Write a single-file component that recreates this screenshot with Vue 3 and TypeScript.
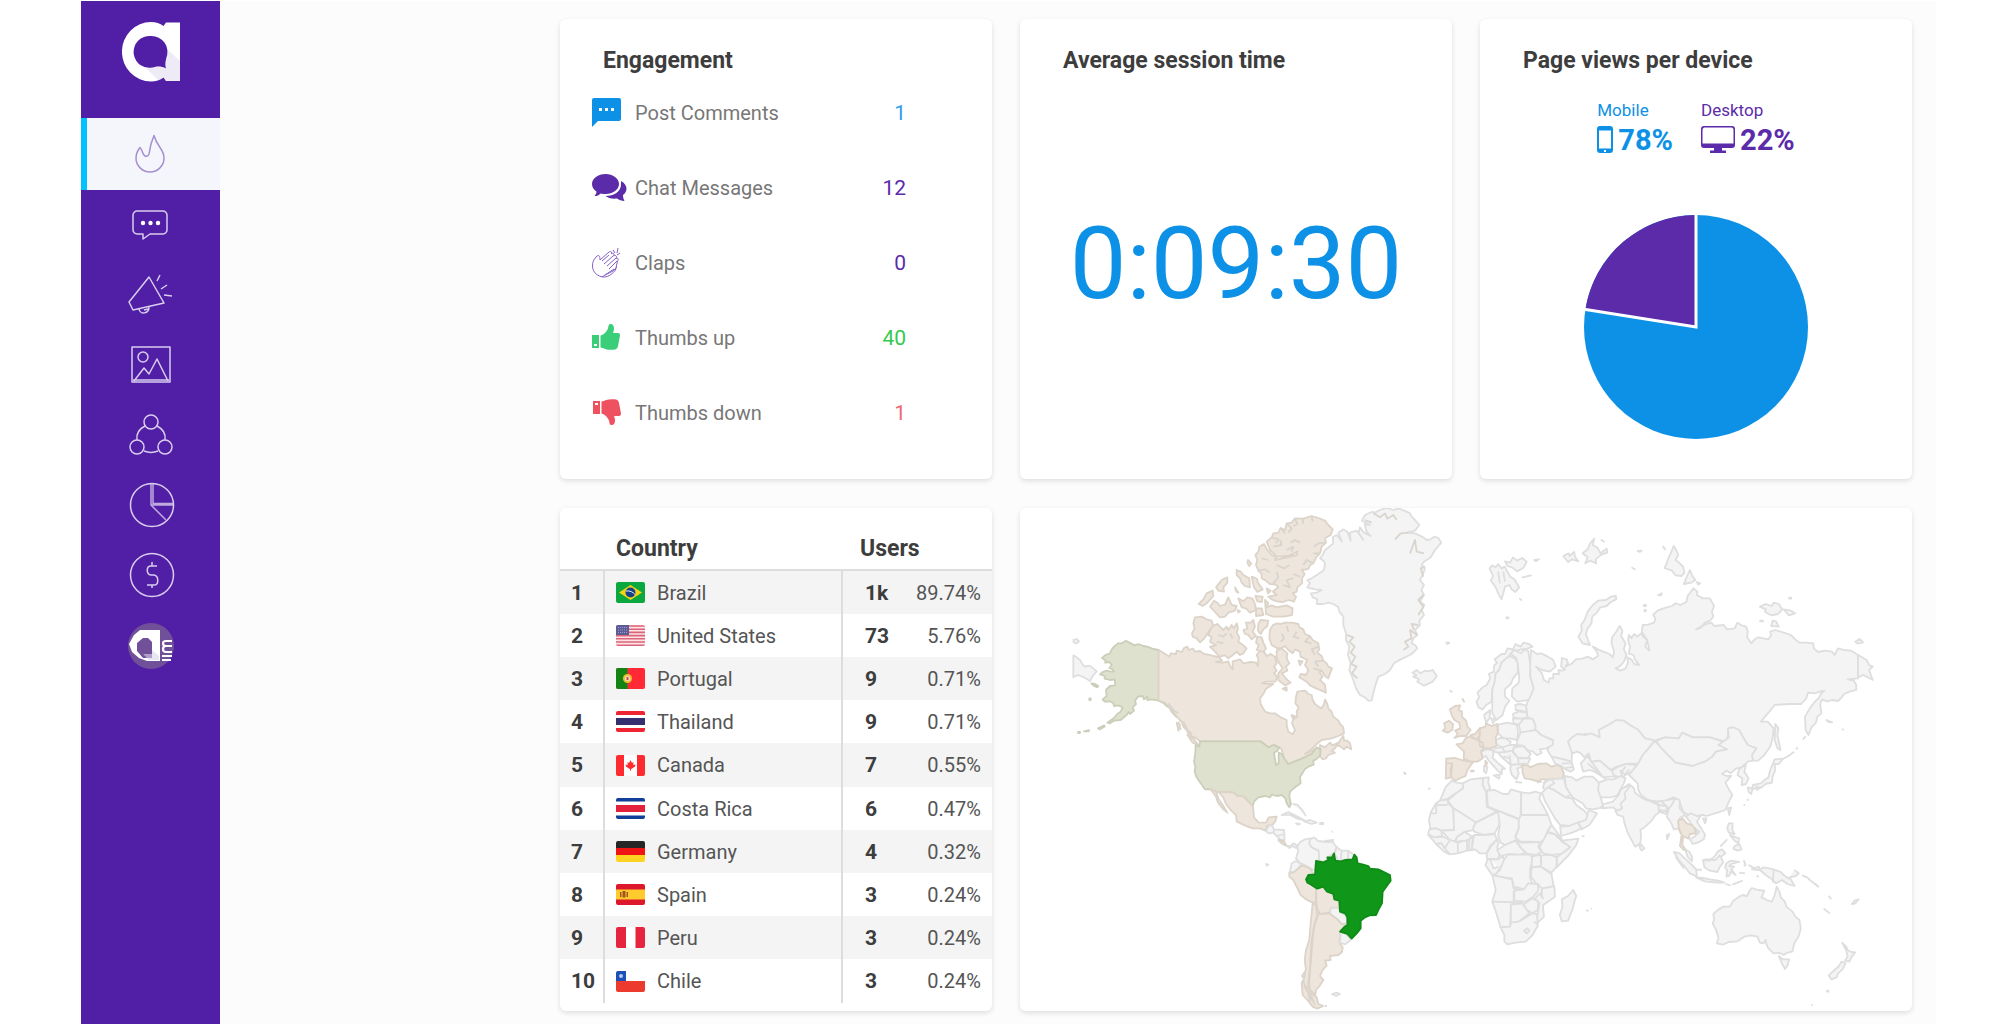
<script setup lang="ts">
interface Metric {
  key: string
  label: string
  value: string
  color: string
}

interface CountryRow {
  code: string
  name: string
  users: string
  share: string
}

interface Shape {
  d: string
  tone?: 'visited' | 'active' | 'top' | 'line'
}

interface Region {
  transform: string
  shapes: Shape[]
}

const navItems = ['Trending', 'Comments', 'Campaigns', 'Media', 'Network', 'Reports', 'Billing', 'Account']

const metrics: Metric[] = [
  { key: 'comments', label: 'Post Comments', value: '1', color: '#2f9fee' },
  { key: 'chat', label: 'Chat Messages', value: '12', color: '#5b2baa' },
  { key: 'claps', label: 'Claps', value: '0', color: '#5b2baa' },
  { key: 'up', label: 'Thumbs up', value: '40', color: '#33c94f' },
  { key: 'down', label: 'Thumbs down', value: '1', color: '#ef6b74' },
]

const countries: CountryRow[] = [
  { code: 'br', name: 'Brazil', users: '1k', share: '89.74%' },
  { code: 'us', name: 'United States', users: '73', share: '5.76%' },
  { code: 'pt', name: 'Portugal', users: '9', share: '0.71%' },
  { code: 'th', name: 'Thailand', users: '9', share: '0.71%' },
  { code: 'ca', name: 'Canada', users: '7', share: '0.55%' },
  { code: 'cr', name: 'Costa Rica', users: '6', share: '0.47%' },
  { code: 'de', name: 'Germany', users: '4', share: '0.32%' },
  { code: 'es', name: 'Spain', users: '3', share: '0.24%' },
  { code: 'pe', name: 'Peru', users: '3', share: '0.24%' },
  { code: 'cl', name: 'Chile', users: '3', share: '0.24%' },
]

const regions: Region[] = [
  {
    // North America and Greenland
    transform: 'translate(-10 -8) scale(.33333)',
    shapes: [
      { d: 'M190 466L200 472 210 480 218 494 225 500 238 497 246 502 260 514 248 528 240 543 222 532 212 528 203 525 190 532Z' },
      { d: 'M190 420L200 417 207 424 200 430 192 428Z' },
      { d: 'M970 130L958 140 945 150 938 165 930 175 940 182 945 190 942 210 925 222 905 235 892 240 900 250 892 262 915 268 935 270 920 278 903 280 908 292 922 298 920 312 940 312 955 308 970 312 985 322 988 335 1000 350 1000 375 1008 400 1008 420 1018 440 1014 465 1022 490 1018 510 1030 540 1038 565 1050 585 1065 592 1075 602 1085 602 1090 580 1098 550 1105 530 1125 522 1140 510 1152 490 1165 482 1185 472 1205 462 1222 445 1215 435 1205 430 1210 415 1222 405 1215 390 1230 375 1228 362 1242 345 1235 330 1243 315 1230 305 1242 285 1234 270 1242 255 1230 240 1240 220 1245 205 1235 195 1242 185 1262 172 1275 150 1294 128 1285 114 1273 110 1262 118 1250 120 1240 112 1215 100 1190 98 1215 92 1228 75 1215 60 1205 50 1200 40 1190 35 1165 25 1150 30 1130 24 1110 30 1095 38 1085 36 1065 45 1056 62 1080 75 1064 72 1070 95 1082 108 1062 98 1050 82 1046 98 1060 120 1040 92 1020 98 1022 122 1012 95 1000 88 985 98 996 125 980 105 968 112Z' },
      { d: 'M1090 40L1110 52 1125 40 1132 56 1150 45 1160 60M1065 60L1085 68M1155 118L1172 100 1195 98M1010 405L1030 412 1018 425 1034 440 1022 458 1036 470 1024 492 1040 500 1026 520 1042 535M1222 405L1200 390 1205 415 1185 425 1195 440 1180 450M1225 375L1205 372 1212 390M1242 160L1220 155 1215 120 1200 160M1245 200L1232 205 1240 230M1240 285L1225 300 1240 320 1225 345', tone: 'line' },
      { d: 'M446 450L430 447 412 440 400 438 385 432 375 436 362 430 348 422 335 430 325 430 312 440 304 450 300 460 285 466 276 474 288 482 285 488 298 486 305 495 298 504 308 508 312 515 300 514 290 512 278 516 270 523 284 528 284 536 300 540 314 538 316 556 300 558 288 570 290 588 278 598 284 605 300 604 310 610 312 618 326 616 338 622 332 635 322 642 312 654 292 668 300 670 312 662 332 660 350 645 356 636 360 642 372 632 368 622 378 612 375 602 384 590 398 588 402 598 412 590 412 600 425 598 446 602Z', tone: 'active' },
      { d: 'M446 602L462 600 472 608 485 608 490 616 500 626 505 638 515 645 522 660 512 664 508 652 498 650 485 635 480 625 470 618 462 610Z', tone: 'active' },
      { d: 'M244 550L255 552 265 558 262 562 250 556ZM238 595H242V600H238ZM264 685L283 676 284 680 268 688ZM222 694L237 690 236 694ZM204 696H210V699H204Z', tone: 'active' },
      { d: 'M446 450L462 460 478 470 482 460 498 462 500 452 516 456 522 444 532 440 536 450 548 446 556 455 570 453 582 462 596 464 610 468 628 472 636 482 618 486 640 488 655 484 660 498 668 508 668 484 690 478 700 490 722 486 738 488 744 498 745 475 740 465 752 450 762 455 770 468 782 462 795 470 800 490 792 500 800 512 792 520 802 530 796 545 770 545 755 550 775 552 790 552 768 566 760 582 750 595 752 612 765 635 780 640 795 640 812 652 830 660 830 675 835 695 848 703 855 690 846 670 850 658 862 650 860 635 866 622 856 610 858 590 862 575 885 572 895 582 905 585 908 600 915 612 925 620 935 625 942 612 945 598 952 612 955 625 965 635 970 650 985 662 990 672 1000 682 1002 700 985 708 962 716 935 720 920 732 908 745 885 762 900 756 915 748 905 762 870 778 835 792 822 775 815 748 795 735 775 742 752 724 570 724 560 715 545 708 535 700 530 690 520 680 515 665 500 650 485 630 465 608 446 602Z', tone: 'visited' },
      { d: 'M930 735L945 742 960 728 968 736 985 728 975 745 965 752 975 758 955 765 948 775 938 778 930 768Z', tone: 'visited' },
      { d: 'M982 736L992 718 1000 708 1002 722 1012 722 1020 730 1024 748 1010 740 1002 748 992 740Z', tone: 'visited' },
      { d: 'M555 352L575 350 590 358 605 362 610 378 598 392 590 405 580 418 570 427 560 415 548 410 546 400 554 385 550 370Z', tone: 'visited' },
      { d: 'M608 378L622 372 632 382 640 390 650 380 656 390 665 375 672 385 680 370 684 385 680 398 688 412 685 425 700 436 710 445 700 460 690 465 680 455 672 462 655 475 645 466 628 470 615 455 600 440 618 436 600 425 605 412 595 405 600 390Z', tone: 'visited' },
      { d: 'M700 390L712 386 708 368 722 368 730 360 735 380 728 395 738 408 725 418 715 405 705 402Z', tone: 'visited' },
      { d: 'M745 372L752 360 775 362 772 378 760 388 752 402 744 392ZM742 410L755 412 760 428 768 445 760 456 740 450 746 435 738 428Z', tone: 'visited' },
      { d: 'M780 390L788 376 800 370 812 372 825 368 845 368 865 372 868 382 880 388 885 402 900 408 908 420 925 430 928 448 922 458 935 468 940 482 950 490 955 500 966 505 960 520 955 535 945 528 935 512 928 516 938 530 930 540 945 555 948 578 935 572 920 566 900 556 890 545 868 532 872 522 888 525 895 510 885 495 892 480 872 470 870 455 855 448 848 460 835 450 825 438 815 445 800 444 785 435 778 415Z', tone: 'visited' },
      { d: 'M800 452L815 445 832 460 830 475 838 490 828 500 832 512 815 520 832 540 842 548 825 556 805 540 805 520 818 505 808 490 800 475Z', tone: 'visited' },
      { d: 'M765 300L775 310 768 322 785 316 800 322 830 316 848 325 846 345 820 350 790 350 768 342Z', tone: 'visited' },
      { d: 'M770 125L785 112 790 100 805 98 812 84 825 90 830 70 845 68 855 55 880 56 905 48 925 54 945 62 955 75 968 88 962 105 945 115 948 128 935 140 930 160 920 170 910 190 900 196 895 207 875 210 884 222 876 235 876 250 862 262 860 275 848 280 858 290 852 305 835 300 820 306 800 304 785 298 775 290 800 285 788 275 805 262 798 254 780 252 770 244 755 235 755 222 745 212 738 195 742 180 736 165 745 155 748 140 762 132 772 150 785 165 800 172 795 180 830 172 860 165 862 155 835 168 800 170 780 150Z', tone: 'visited' },
      { d: 'M855 55L862 72 850 78M880 56L878 72M905 48L908 65M830 70L845 85 835 98M812 84L825 100M785 112L805 118 798 130M790 140L815 135 810 120M830 150L850 140 845 155M870 128L855 120 842 128M945 128L925 130 912 140M930 160L910 160M910 190L890 180 880 195M755 175L775 180M745 212L765 208 780 218M790 250L805 232 800 215M820 255L840 262 830 240 850 235M800 195L822 205 838 195M870 230L850 222M835 395L830 378M860 395L850 410 868 415M900 408L885 425 905 430M925 440L905 448 915 465M940 482L915 485 925 500M935 512L910 505M815 400L822 415 812 425M625 405L640 410 650 400M660 400L668 415M620 425L640 430M655 300L660 320M632 335L645 328M520 665L532 690 545 702M505 665L512 690M475 610L492 632 505 640', tone: 'line' },
      { d: 'M680 210L692 215 700 225 718 235 720 262 705 258 695 248 690 235 680 225ZM725 230L740 236 745 250 758 268 742 276 732 262ZM600 320L612 302 622 308 630 318 645 314 655 292 665 315 680 318 675 332 655 338 645 350 630 352 615 336ZM566 312L580 298 590 280 608 272 610 288 592 308 578 318ZM618 262L635 240 652 232 652 248 640 262 642 275 625 272ZM685 295L700 304 712 292 728 296 735 312 738 330 720 338 708 325 695 322ZM738 325L755 325 760 345 738 348ZM736 288L758 290 756 306 742 304ZM714 180L724 190 718 198 712 188ZM675 262L685 278 679 275ZM770 265L782 272 774 280ZM683 330L690 334 685 338ZM818 566L830 562 830 572ZM866 482L878 484 870 496ZM500 668L510 675 505 692ZM532 704L552 718 565 735 548 728ZM845 645L855 648 848 655Z', tone: 'visited' },
      { d: 'M570 724L752 724 775 742 790 735 808 742 802 752 792 758 798 795 806 790 806 758 816 762 822 775 835 792 870 778 905 762 920 742 932 748 930 768 918 778 910 782 911 794 895 800 884 808 876 822 870 830 872 850 855 862 840 875 838 890 843 912 838 922 830 910 826 895 815 885 800 888 785 884 780 892 765 888 745 892 732 905 728 918 716 908 710 898 698 888 688 892 670 878 620 876 602 868 585 868 572 850 560 832 554 815 556 800 552 785 556 760 557 735 568 740Z', tone: 'active' },
    ],
  },
  {
    // Central and South America
    transform: 'translate(190 252) scale(.33333)',
    shapes: [
      { d: 'M2 88L20 95 70 98 82 108 98 108 112 122 128 138 130 150 132 172 145 187 168 188 176 172 200 170 196 184 186 196 172 196 166 212 150 205 128 205 104 196 80 184 78 165 60 148 48 132 40 112 28 98 18 96 26 118 40 138 52 158 40 148 24 128 18 110Z', tone: 'visited' },
      { d: 'M168 214L176 197 186 197 192 208 222 210 224 240 212 240 200 228 190 218 176 220ZM192 208L190 218M200 228L224 222' },
      { d: 'M205 240L222 244 230 258 215 250Z', tone: 'visited' },
      { d: 'M230 256L240 260 250 250 262 256 258 264 248 258 238 264Z' },
      { d: 'M215 165L235 156 255 166 282 180 262 176 240 164ZM282 184L300 180 320 188 305 192ZM258 190L270 192 262 194ZM330 189H340V192H330ZM248 132L262 134 275 148 288 168M365 215H369M345 243L370 240 368 246 352 246ZM168 312L175 314 170 317Z' },
      { d: 'M300 235L285 238 270 247 262 258 264 275 258 295 268 308 285 316 300 325 316 332 318 302 328 302 326 272 306 262 298 252 304 240Z' },
      { d: 'M300 238L312 232 325 243 350 246 368 246 380 262 372 280 355 290 345 305 328 303 326 272 306 262 298 252Z' },
      { d: 'M380 262L395 272 415 272 432 285 427 298 405 300 385 303 374 282ZM395 272L392 300M415 272L414 300' },
      { d: 'M245 310L258 303 274 312 262 328 250 338 240 335Z' },
      { d: 'M238 337L250 338 262 328 276 316 300 325 312 345 290 355 300 372 318 384 318 430 300 424 285 416 272 405 262 384 250 360 238 350Z', tone: 'visited' },
      { d: 'M318 385L340 380 350 394 370 402 375 420 388 425 388 445 365 443 358 458 345 460 330 464 320 440Z', tone: 'visited' },
      { d: 'M362 446L378 442 388 448 390 457 408 465 412 490 395 492 385 480 360 462Z' },
      { d: 'M325 462L358 460 382 478 395 492 410 495 392 515 388 548 398 562 396 576 385 585 360 588 362 600 345 602 350 616 338 630 330 648 340 660 330 676 318 690 316 705 300 690 297 670 302 610 307 550 312 500Z', tone: 'visited' },
      { d: 'M308 430L318 436 322 465 312 498 304 550 300 620 294 678 302 700 320 712 325 732 340 738 322 746 308 740 292 720 278 705 275 670 282 655 276 648 288 630 284 600 288 570 298 540 302 490Z', tone: 'visited' },
      { d: 'M290 690L305 712 315 735M282 675L295 700 300 725M286 640L280 665 292 690M296 705L310 725M345 738H350', tone: 'line' },
      { d: 'M392 516L404 520 416 530 422 540 405 553 390 548Z' },
      { d: 'M366 702L380 698 390 702 378 708Z' },
      { d: 'M318 303L340 307 355 300 352 292 366 292 372 280 376 302 392 304 405 300 428 298 433 284 440 292 443 310 460 314 475 318 480 326 505 328 525 338 540 345 542 362 532 376 518 395 516 430 506 448 498 465 478 466 465 472 452 482 452 505 440 520 425 536 412 522 390 515 402 502 412 495 412 472 405 460 390 455 388 422 373 418 370 402 350 394 340 380 322 386 300 372 292 368 288 358 295 345 315 343Z', tone: 'top' },
    ],
  },
  {
    // Europe and Northern Asia
    transform: 'translate(380 -8) scale(.34435 .33333)',
    shapes: [
      { d: 'M36 518L48 510 60 520 72 512 82 514 95 510 107 528 95 545 70 557 50 545 56 538 38 530 48 526Z' },
      { d: 'M260 205L268 196 278 202 285 192 295 205 304 200 312 215 320 230 332 238 346 262 335 276 324 268 318 255 305 260 300 280 295 298 286 282 278 262 264 242 270 228ZM305 184L320 188 328 172 340 182 355 174 368 185 358 204 340 214 325 202 312 198ZM390 180L404 178 395 184ZM356 232L380 226 366 230ZM348 296L352 300ZM309 352H315V355H309ZM134 428L143 428 138 432ZM146 572L150 576ZM285 215L290 250M300 215L305 245' },
      { d: 'M474 168L490 160 492 168 506 156 508 170 518 184 500 178 488 186ZM530 160L545 148 552 130 564 116 560 135 575 145 582 160 600 146 602 158 585 164 568 178 570 190 552 182 538 190 545 172ZM585 120L593 125ZM690 153L702 152 696 156ZM674 203L682 208ZM750 285L760 280 758 286ZM708 315H714V318H708ZM710 330H714V334H710ZM764 140L770 148Z' },
      { d: 'M627 288L628 298 612 306 600 318 582 322 570 340 558 350 556 370 545 385 540 402 546 420 552 435 530 430 518 410 528 392 526 375 536 360 545 335 560 315 575 302 598 300 612 290Z' },
      { d: 'M795 138L802 150 808 165 800 180 808 186 822 200 826 218 818 228 800 226 790 212 768 204 774 192 778 178 786 160ZM824 252L832 232 842 210 850 230 858 240 845 248ZM862 246L872 250 866 254Z' },
      { d: 'M1045 320L1062 312 1080 318 1085 308 1100 312 1110 328 1098 342 1078 346 1060 336 1062 328ZM1114 328L1135 332 1147 340 1130 346ZM1078 378L1082 362 1092 364 1100 380ZM1130 293H1136V296H1130ZM1046 362H1054V364H1046ZM1322 425L1335 417 1345 427 1330 431Z' },
      { d: 'M380 450L398 462 410 460 430 470 445 480 452 500 435 515 412 510 395 500 412 520 418 540 432 548 434 535 445 535 445 522 462 522 460 510 470 512 480 508 468 500 470 474 484 478 488 488 480 500 500 490 510 478 530 476 545 470 560 478 575 468 572 455 560 440 575 448 590 455 608 462 618 472 622 455 614 430 616 412 628 395 638 378 646 392 642 408 655 430 650 448 658 465 650 485 640 498 626 505 640 512 655 505 662 488 660 472 672 478 680 492 695 495 682 478 678 465 664 460 668 440 662 420 665 405 672 415 680 402 690 410 700 400 706 410 718 420 712 440 724 452 718 420 702 395 705 375 720 374 738 368 742 356 735 345 748 332 765 325 790 318 800 310 815 315 832 305 835 288 852 265 864 275 862 285 880 295 900 295 912 318 906 335 910 350 900 362 885 368 875 382 860 388 885 374 905 368 912 378 940 375 950 388 972 385 980 368 992 376 1005 380 1010 395 1008 412 1020 430 1030 418 1040 412 1070 418 1078 405 1075 395 1090 390 1115 398 1135 405 1148 418 1160 428 1180 428 1200 430 1202 445 1214 456 1235 452 1255 455 1262 465 1272 445 1290 450 1310 452 1330 465 1330 535 1300 538 1318 542 1325 555 1325 570 1305 575 1290 582 1280 595 1272 603 1255 600 1240 604 1226 598 1220 612 1224 640 1212 650 1208 668 1195 682 1186 705 1178 690 1176 650 1190 625 1205 605 1218 592 1222 582 1232 572 1215 576 1205 580 1185 578 1180 595 1165 612 1130 612 1088 615 1075 632 1048 665 1068 665 1085 685 1082 715 1075 740 1058 765 1040 782 1025 782 1022 765 1035 745 1010 735 998 715 985 690 965 682 955 685 952 710 945 725 900 712 850 712 820 698 810 715 770 712 740 722 712 715 690 690 650 662 610 672 578 690 580 712 540 702 500 712 488 725 500 752 498 785 475 778 440 770 428 750 445 720 410 705 390 690 390 665 370 650 366 620 372 600 388 565 378 530 378 490Z' },
      { d: 'M1330 465L1342 472 1355 480 1362 495 1373 500 1362 510 1373 540 1345 525 1330 532Z' },
      { d: 'M1090 672L1099 685 1096 705 1105 750 1096 745 1088 720ZM1110 778L1128 768 1145 755M1150 748L1155 742M1170 718L1178 708M1238 660L1255 667 1245 666ZM1283 687L1289 690' },
      { d: 'M225 578L240 562 252 555 262 535 258 522 272 515 274 495 282 490 275 478 295 462 305 462 312 445 328 448 335 432 350 440 358 428 375 432 385 440 370 446 352 448 340 452 330 450 320 462 312 475 295 488 288 510 278 520 275 545 268 570 266 605 250 615 240 628 228 622 222 605 230 592Z' },
      { d: 'M320 468L336 478 342 490 342 518 328 535 322 552 304 568 305 590 318 602 305 620 298 645 280 660 268 640 268 605 268 570 275 545 278 520 288 510 295 488 308 475Z' },
      { d: 'M330 450L352 460 358 450 372 452 378 490 378 530 388 565 374 600 340 605 325 590 326 565 345 548 346 530 342 490 338 475 322 462Z' },
      { d: 'M244 645L262 630 260 655 250 668ZM265 655L278 658 270 670Z' },
      { d: 'M335 615L348 612 366 616 368 636 350 632 336 630ZM328 642L345 634 368 638 370 652 352 656 330 652ZM328 655L352 656 360 665 345 674 330 670Z' },
      { d: 'M345 674L360 656 385 656 394 680 390 695 350 697Z' },
      { d: 'M285 674L312 668 340 675 343 700 340 720 318 715 300 715 285 700Z' },
      { d: 'M343 715L350 697 395 690 410 705 445 722 443 735 425 745 405 748 412 758 398 766 386 755 370 750 360 738 338 735Z' },
      { d: 'M276 722L290 714 305 715 322 725 318 735 298 742 282 735ZM298 742L318 735 338 735 326 752 304 756ZM274 745L298 742 304 756 285 758 272 755ZM330 742L358 738 370 752 380 762 370 775 342 772 328 758ZM285 758L304 756 326 752 342 772 345 792 322 795 305 780 292 768ZM300 770L320 775M318 765L322 795M345 775L378 775 372 790 348 792M322 795L345 792 358 800 340 805 345 820 338 838 325 825 320 808ZM335 846L355 848M398 848L412 845' },
      { d: 'M236 756L250 748 268 750 272 762 268 772 285 790 305 806 295 808 296 822 284 812 270 796 256 780 250 768 240 772ZM272 826L290 824 288 836ZM244 798L254 800 250 820 244 815Z' },
      { d: 'M232 685L248 680 250 670 265 678 282 672 284 700 278 712 280 738 262 745 245 745 232 738 230 710ZM205 705L218 702 232 684 232 708 222 718 208 714ZM164 733L182 730 190 715 205 708 220 718 240 728 244 745 235 755 240 775 225 785 205 785 185 776 186 755ZM145 628L160 618 175 616 170 630 180 635 180 650 192 662 196 680 205 690 192 708 175 708 158 714 168 702 160 692 175 685 172 668 158 660 150 645ZM124 692L132 685 128 670 142 662 154 672 152 690 138 698ZM134 776L160 774 185 782 213 786 202 800 195 812 190 828 172 836 160 842 148 832 152 790 134 790ZM134 790L152 790 146 810 148 832 133 836ZM248 782L253 790 248 798ZM206 812H214V814H206ZM182 597L186 605ZM12 818L16 822ZM82 866H88', tone: 'visited' },
      { d: 'M355 795L372 796 378 802 400 792 425 790 440 800 455 795 468 800 476 820 472 835 430 838 410 838 402 845 380 838 362 835 356 818Z', tone: 'visited' },
      { d: 'M440 770L475 778 498 785 505 808 495 815 480 808 470 798 450 790ZM470 790L500 790M478 805L505 800' },
      { d: 'M488 725L500 712 515 702 540 705 555 700 580 712 578 690 610 672 628 660 650 662 672 678 690 688 712 715 740 722 722 745 705 765 692 790 655 792 630 800 610 810 595 795 580 782 555 785 548 760 535 772 525 760 515 755 500 760Z' },
      { d: 'M525 790L545 768 556 786 580 782 600 800 615 812 635 800 655 792 690 795 678 812 655 825 640 812 650 838 628 828 612 830 590 832 570 818 552 810 532 815ZM545 790L600 840M556 786L590 832M615 812L625 835M655 800L640 820M665 808L650 830' },
      { d: 'M745 722L770 712 810 715 820 698 850 712 900 712 930 722 950 735 945 748 918 755 905 772 885 785 850 798 800 788 778 765 755 745Z' },
      { d: 'M740 722L760 745 778 765 800 788 850 798 885 785 905 772 918 755 950 748 925 735 945 720 955 712 952 685 968 682 985 690 998 715 1010 735 1035 745 1022 765 1025 782 1010 785 992 802 975 806 960 820 948 812 935 822 948 828 962 828 945 848 955 868 965 885 955 905 945 930 915 940 890 948 878 945 862 948 838 945 822 935 810 900 795 892 770 902 745 905 720 900 700 885 692 870 690 850 665 825 692 790 705 765 722 745Z' },
      { d: 'M985 808L1005 792 1000 815 1012 835 1005 852 992 855 994 835 980 825Z' },
      { d: 'M1088 778L1112 776 1100 792 1088 792 1090 810 1082 830 1080 848 1062 852 1050 862 1035 862 1022 870 1025 855 1048 850 1056 842 1070 832 1075 810ZM1010 862L1024 866 1020 882 1012 875ZM1035 860L1046 864 1036 870ZM952 925L962 922 956 945ZM880 955L890 955 886 970ZM998 914L1002 916M1010 896V902' },
      { d: 'M642 870L665 852 680 865 682 878 700 892 720 902 745 905 770 902 800 895 792 915 780 930 770 925 755 935 742 945 728 965 712 980 698 990 700 1005 698 1030 683 1040 675 1025 662 1000 652 970 648 950 632 945 625 932 645 925 640 912 655 895 650 882ZM697 1030L710 1045 702 1052 697 1045ZM720 900L750 915 748 905' },
      { d: 'M750 915L775 918 772 942 752 935ZM760 905L780 925M750 930L778 935' },
      { d: 'M583 922L592 912 618 905 635 885 642 868 655 860 668 858 652 880 655 895 640 912 645 925 632 932 618 922 590 925ZM578 848L600 838 620 838 640 828 655 835 650 850 640 868 632 885 615 892 583 892 575 870ZM478 828L500 832 512 842 535 830 560 830 578 848 575 870 583 892 590 922 560 928 540 925 530 910 505 895 495 885 482 862Z' },
      { d: 'M422 842L440 838 476 835 482 862 496 885 480 892 450 872 430 862 422 872 415 862ZM440 838L448 850 425 865M415 850L430 842' },
      { d: 'M412 878L430 862 450 872 480 892 500 895 512 915 535 932 545 945 540 960 515 968 490 978 465 975 450 955 435 928 422 905ZM465 980L490 978 515 968 528 985 500 998 468 1008ZM548 930L572 940 560 960 550 975 528 988 518 968 540 960ZM528 1008L536 1010' },
      { d: 'M780 928L792 910 798 895 812 900 812 925 828 945 812 955 808 970 815 1000 808 985 795 988 788 970 775 950ZM830 950L845 940 862 948 872 950 862 965 875 985 886 1005 882 1018 865 1028 850 1032 842 1018 858 1008 862 995 850 980 842 965ZM850 980L870 995 862 1005M775 1005L782 1002 776 1018Z' },
      { d: 'M808 962L822 956 832 970 848 975 858 988 858 1000 842 1002 838 1016 822 1008 820 1035 832 1052 824 1050 813 1038 818 1005 810 985Z', tone: 'visited' },
    ],
  },
  {
    // Africa, South-East Asia and Oceania
    transform: 'translate(380 252) scale(.34435 .33333)',
    shapes: [
      { d: 'M150 62L165 68 182 70 184 85 165 98 140 115 115 125 125 100 132 82Z' },
      { d: 'M105 130L115 122 138 118 140 130 155 145 157 210 120 212 104 205 88 206 84 180 90 155ZM90 160H105V135H138' },
      { d: 'M182 70L205 58 242 54 240 72 250 95 252 140 282 155 220 188 155 145 138 122 165 98 184 85Z' },
      { d: 'M242 54L258 52 256 68 262 85 250 95 240 75Z' },
      { d: 'M252 92L275 90 300 102 315 102 322 88 352 97 350 178 284 152 255 140Z' },
      { d: 'M352 97L375 100 392 95 410 100 404 115 416 138 430 165 352 165Z' },
      { d: 'M155 145L218 185 215 210 188 215 165 232 160 245 145 240 120 212 157 210Z' },
      { d: 'M220 188L284 155 292 165 288 195 275 220 245 225 215 215 212 205Z' },
      { d: 'M284 152L345 178 345 205 335 228 338 240 305 255 292 248 285 225 290 195Z' },
      { d: 'M352 165L430 165 440 195 428 215 418 240 405 248 380 245 350 245 335 232 345 205 345 178Z' },
      { d: 'M428 218L448 222 462 235 470 245 495 260 470 282 440 285 415 280 405 262Z' },
      { d: 'M440 195L462 225 470 238 450 222 428 215ZM470 242L518 236 512 255 490 285 455 322 455 292 495 262Z' },
      { d: 'M85 208L104 205 120 212 122 228 98 232 82 222ZM82 225L98 232 125 230 145 240 140 262 130 265 120 250 105 252 95 240Z' },
      { d: 'M105 252L120 250 130 265 145 283 128 275ZM130 265L145 240 168 248 168 280 145 283ZM168 248L195 240 194 272 168 280ZM160 245L165 232 188 215 210 230 195 242ZM195 242L212 228 208 270 194 272ZM202 238L200 272' },
      { d: 'M215 225L245 225 275 222 282 238 262 258 252 280 232 280 218 268 208 270Z' },
      { d: 'M252 280L265 258 282 238 286 250 282 262 290 275 285 298 252 296Z' },
      { d: 'M282 270L305 255 335 242 350 262 365 278 345 285 315 282 292 288Z' },
      { d: 'M338 240L352 248 405 246 402 262 412 275 395 285 370 282 350 262Z' },
      { d: 'M248 316L255 297 285 298 300 288 302 305 290 325 280 342 268 345ZM262 300L272 325 285 320' },
      { d: 'M302 300L312 284 345 284 378 284 386 298 378 325 378 355 385 372 365 388 330 380 325 355 300 352 272 348 290 330Z' },
      { d: 'M384 290L408 284 410 318 382 322ZM410 286L440 285 455 292 455 320 440 338 410 320ZM382 322L410 320 440 342 446 380 412 386 395 370 380 350Z' },
      { d: 'M268 345L300 352 325 358 330 385 345 388 330 395 330 428 268 425 278 390Z' },
      { d: 'M332 392L360 388 372 370 400 372 402 392 385 412 365 425 332 422Z' },
      { d: 'M412 386L448 378 450 410 415 436 418 470 395 492 400 460 405 430 392 415 405 400 415 415 410 400ZM400 372L412 386 412 405' },
      { d: 'M360 432L385 415 402 425 400 450 385 460 365 448Z' },
      { d: 'M268 425L355 428 322 434 320 500 292 502 280 460Z' },
      { d: 'M322 434L355 430 375 460 345 485 322 490Z' },
      { d: 'M292 502L320 500 322 488 345 485 385 460 398 462 400 498 385 525 365 545 335 548 312 553 303 545 303 525ZM360 512L370 505 376 512 368 520ZM390 485L398 492' },
      { d: 'M503 390L512 408 508 420 502 445 488 482 470 484 464 465 472 440 470 418 488 408Z' },
      { d: 'M540 452H548M554 446H558' },
      { d: 'M828 268L840 275 848 290 848 304 836 292ZM795 276L812 280 830 298 845 312 860 328 862 350 842 340 825 318 810 300ZM860 352L880 354 900 358 925 362 942 368 920 368 885 364ZM800 290L815 312 825 325M862 328L876 330' },
      { d: 'M880 300L900 302 915 288 922 275 935 268 945 280 932 290 938 308 928 322 922 336 900 332 884 322ZM884 298L915 300 930 285M948 310L960 302 985 306 962 312 956 318 970 320 962 328 975 345 960 335 956 348 948 350 950 330 944 322ZM945 372L960 376M965 374L995 362M998 300L1004 315 998 318M1012 315L1030 325 1042 320 1045 330 1020 328M985 338L1002 340M1035 348L1042 350' },
      { d: 'M955 190L966 190 965 210 972 222 955 218 950 205ZM958 225L970 230 985 235 982 250 970 240ZM972 258L985 252 992 268 980 272 968 266ZM930 260L950 238' },
      { d: 'M1045 330L1055 322 1072 325 1085 328 1105 336 1120 350 1135 358 1146 378 1125 372 1110 360 1092 370 1080 358 1062 345ZM1085 328L1083 368M1130 352L1150 348 1158 340 1145 330M1168 346L1182 352 1195 364 1215 380 1205 370M1245 407L1252 418M1230 445L1248 460M1312 432L1320 422 1332 418 1322 430Z' },
      { d: 'M910 462L925 448 940 440 958 440 968 422 985 410 995 405 1008 408 1015 392 1022 384 1040 390 1058 392 1050 412 1065 420 1080 425 1088 405 1094 380 1102 395 1106 412 1118 425 1122 440 1140 455 1148 470 1160 480 1164 505 1158 528 1145 550 1140 574 1120 580 1115 585 1100 578 1085 580 1070 565 1065 555 1062 540 1056 550 1045 548 1038 530 1020 526 1000 530 980 544 955 546 938 554 920 550 925 535 918 510 908 490 912 480Z' },
      { d: 'M1100 588L1112 598 1130 598 1126 615 1118 627 1110 612Z' },
      { d: 'M1284 548L1296 560 1300 570 1310 576 1322 577 1312 590 1305 605 1292 602 1300 590 1296 572ZM1282 605L1294 610 1285 628 1272 640 1268 652 1252 658 1245 646 1262 630 1275 618ZM1240 692H1244V695H1240ZM1194 735H1198' },
    ],
  },
]
</script>

<template>
  <div class="page">
    <aside class="sidebar">
      <a class="brand" href="#" aria-label="Home">
        <svg width="58" height="60" viewBox="0 0 58 60">
          <path fill="#fff" fill-rule="evenodd" d="M29 0c5 0 9 1.500 12.500 4L44 .5h14v58.500H44l-2.500-3.500C38 58 34 59.500 29 59.500A29 29.700 0 0 1 29 0ZM29 14a16 16 0 1 0 4 31c3-.800 7-.500 11 1.500-1-4-.600-7 .400-10.500A16 16 0 0 0 29 14Z" />
          <path fill="#d9d3ea" d="M45 27l13 12v20H44l-2.500-3.500L36 58l-13-13c6 1.500 13-1.500 21 1.500-1.500-6 2-13 1-19.500Z" opacity=".45" />
        </svg>
      </a>
      <nav class="nav" aria-label="Main">
        <a v-for="(item, i) in navItems" :key="item" href="#" class="nav-item" :class="{ current: i === 0 }" :aria-label="item">
          <svg class="nav-icon" width="48" height="48" viewBox="0 0 48 48">
            <path v-if="i === 0" d="M22 24c1-8 3-14 5-18.500 1.500 5 3 8 6 12 2.500 3.500 4 7 4 10.500a14 14 0 0 1-28 0c0-4 2-8 4-10.500 2.500 2 2 7 5 8.500 1.500.800 3 .300 4-2Z" />
            <template v-else-if="i === 1">
              <path d="M10 10h26c2 0 4 2 4 4v15c0 2-2 4-4 4H23l-7 5v-5h-6c-2 0-4-2-4-4V14c0-2 2-4 4-4Z" />
              <g fill="#fff" stroke="none"><circle cx="16" cy="22" r="2.200" /><circle cx="23.500" cy="22" r="2.200" /><circle cx="31" cy="22" r="2.200" /></g>
            </template>
            <path v-else-if="i === 2" d="M22 6l15 26-31 7-4-8ZM12 38c1 6 10 5 10-2M17 39l4-1M33 4l-3 6M40 14l-6 4M37 24l8 1" />
            <g v-else-if="i === 3"><path d="M5 6h38v35H5ZM7 40l10-13 5 6 8-15 11 22M6 39h36" /><circle cx="16" cy="16" r="5" /></g>
            <g v-else-if="i === 4"><circle cx="24" cy="11" r="7" /><circle cx="10" cy="36" r="7" /><circle cx="38" cy="36" r="7" /><path d="M18 15c-6 3-9 8-8 14M30 15c6 3 9 8 8 14M17 40c5 2 9 2 14 0" /></g>
            <g v-else-if="i === 5"><circle cx="25" cy="24" r="21.500" /><path d="M24 3v21l15 15M24 24h22M26 3v19.500h20" stroke-opacity=".8" /></g>
            <g v-else-if="i === 6"><circle cx="25" cy="24" r="21.500" /><path d="M30 15h-6c-5 0-5 8 0 9h3c5 1 5 10 0 10h-7M25 11v4M25 34v3" /></g>
            <g v-else stroke="none">
              <circle cx="24" cy="25" r="23" fill="#71509a" />
              <path fill="#fff" fill-rule="evenodd" d="M13 9h20v31H20l-8-3-7-6-3-8 5-9ZM16 17l-6 5v8l6 7h9V21l-4-4Z" />
              <path fill="#d9d3ea" d="M25 29l7 6v4H22l-6-6h9Z" opacity=".6" />
              <path fill="none" stroke="#fff" stroke-width="2.200" d="M45 20h-6c-4 0-4 5 0 5h6M39 25c-4 0-4 6 0 6h6M35 35h10M35 39h9" />
            </g>
          </svg>
        </a>
      </nav>
    </aside>

    <main class="board">
      <section class="card">
        <h2 class="card-title">Engagement</h2>
        <ul class="metrics">
          <li v-for="m in metrics" :key="m.key" class="metric">
            <svg class="metric-icon" width="36" height="30" viewBox="0 0 36 30">
              <g v-if="m.key === 'comments'">
                <path fill="#0c91e7" d="M2 0h25a2 2 0 0 1 2 2v19a2 2 0 0 1-2 2H6l-6 6V2a2 2 0 0 1 2-2Z" />
                <path fill="#fff" d="M7 10h3v3H7ZM13 10h3v3h-3ZM19 10h3v3h-3Z" />
              </g>
              <g v-else-if="m.key === 'chat'" fill="#5b2baa">
                <path d="M13.500 1C21 1 27 5.500 27 11s-6 10-13.500 10c-1.700 0-3.200-.200-4.700-.600C7 22 5 23 2.500 23c1-1.300 2-2.700 2-4.600C1.700 16.600 0 14 0 11 0 5.500 6 1 13.500 1Z" />
                <path d="M29 8c3.500 2 5.500 4.500 5.500 7.700 0 2.600-1.300 4.700-3.500 6.300 0 2.500.500 4 1.500 6-3 0-5.500-1-7.500-2.500-5 .600-9-.500-11.500-2.500C22 23 29 18.500 29 11.500Z" />
              </g>
              <g v-else-if="m.key === 'claps'" fill="none" stroke="#8460c4" stroke-width="1">
                <path d="M4 9c3-3 4-1 4 3l9-8c2-1.500 3.500.500 2 2 2-2 4 0 2.500 2 2-1.500 4 .500 2.500 2.500 2-1 3 1 1.500 2.500l-2 9c-2 3-7 7-11 7-7 0-12-5-12-11 0-4 1-6 3.500-9ZM10 13l7-6M12 16l9-8M15 18l9-8M17 21l8-8M22 21L10 29M21 2l2 3M26 0l-1 5M28 5l-3 2M13 27l8-4 4-4" />
              </g>
              <g v-else-if="m.key === 'up'" fill="#3bce78">
                <path fill-rule="evenodd" d="M0 12h7v13H0ZM2 21h3v2H2Z" />
                <path d="M8.500 12.500c4-1 6-4 7.500-7C16.500 3 16.500 1 18.500 1 21 1 22 3 22 5.500c0 2-.500 3-1 4.500h5c1.500 0 2 1 2 2.500L26 23c-.500 2-1 3-3 3.500-3 .500-7 .500-10-.500-1.500-.500-3-1.500-4.500-1.500Z" />
              </g>
              <g v-else fill="#ee5160">
                <path fill-rule="evenodd" d="M1 3h7v13H1ZM3 5h3v2H3Z" />
                <path d="M9.500 15.500c4 1 6 4 7.500 7 .500 2.500.500 4.500 2.500 4.500 2.500 0 3.500-2 3.500-4.500 0-2-.500-3-1-4.500h5c1.500 0 2-1 2-2.500L27 5c-.500-2-1-3-3-3.500-3-.500-7-.500-10 .500-1.500.500-3 1.500-4.500 1.500Z" />
              </g>
            </svg>
            <span>{{ m.label }}</span>
            <span class="metric-value" :style="{ color: m.color }">{{ m.value }}</span>
          </li>
        </ul>
      </section>

      <section class="card">
        <h2 class="card-title">Average session time</h2>
        <p class="clock">0:09:30</p>
      </section>

      <section class="card">
        <h2 class="card-title">Page views per device</h2>
        <div class="devices">
          <div class="device mobile">
            <span>Mobile</span>
            <strong>
              <svg width="16" height="28" viewBox="0 0 16 28"><path fill="currentColor" fill-rule="evenodd" d="M3 0h10a3 3 0 0 1 3 3v21a3 3 0 0 1-3 3H3a3 3 0 0 1-3-3V3a3 3 0 0 1 3-3ZM2 4.500v18h12v-18ZM7 24v2h2v-2Z" /></svg>
              78%
            </strong>
          </div>
          <div class="device desktop">
            <span>Desktop</span>
            <strong>
              <svg width="34" height="28" viewBox="0 0 34 28"><path fill="currentColor" fill-rule="evenodd" d="M3 0h28a3 3 0 0 1 3 3v16a3 3 0 0 1-3 3H21v2.500h4V27H9v-2.500h4V22H3a3 3 0 0 1-3-3V3a3 3 0 0 1 3-3ZM1.500 3v14.500h31V3L31 1.500H3Z" /></svg>
              22%
            </strong>
          </div>
        </div>
        <svg class="pie" width="226" height="226" viewBox="0 0 226 226" role="img" aria-label="Mobile 78%, desktop 22%">
          <circle cx="113" cy="113" r="112" fill="#0c91e7" />
          <path d="M113 113V1A112 112 0 0 0 2.400 95.500Z" fill="#5b2baa" />
          <path d="M113 0V113L1 95.300" fill="none" stroke="#fff" stroke-width="3" />
        </svg>
      </section>

      <section class="card ranking">
        <table>
          <colgroup>
            <col class="col-rank" />
            <col class="col-country" />
            <col class="col-users" />
            <col />
          </colgroup>
          <thead>
            <tr>
              <th></th>
              <th scope="col">Country</th>
              <th scope="col" colspan="2">Users</th>
            </tr>
          </thead>
          <tbody>
            <tr v-for="(c, i) in countries" :key="c.code">
              <th scope="row">{{ i + 1 }}</th>
              <td>
                <span class="country">
                  <svg class="flag" width="29" height="21" viewBox="0 0 29 21" aria-hidden="true">
                    <g v-if="c.code === 'br'"><path fill="#0ba73f" d="M0 0h29v21H0Z" /><path fill="#f5d313" d="M14.500 3L26 10.500 14.500 18 3 10.500Z" /><circle cx="14.500" cy="10.500" r="5" fill="#15428e" /><path d="M10 9c4-.500 7 1 9 3.500" stroke="#e8eef5" fill="none" /></g>
                    <g v-else-if="c.code === 'us'"><path fill="#fbe3e6" d="M0 0h29v21H0Z" /><path stroke="#dc6478" stroke-width="1.600" d="M0 1h29M0 4.200h29M0 7.400h29M0 10.600h29M0 13.800h29M0 17h29M0 20.200h29" /><path fill="#5c5c96" d="M0 0h13v10H0Z" /><path stroke="#9b9bc4" stroke-dasharray="1 1" d="M2 2.500h9M2 5h9M2 7.500h9" /></g>
                    <g v-else-if="c.code === 'pt'"><path fill="#ff2a36" d="M0 0h29v21H0Z" /><path fill="#138413" d="M0 0h11.500v21H0Z" /><circle cx="11.500" cy="10.500" r="4.500" fill="#ecc22d" /><circle cx="11.500" cy="10.500" r="2.500" fill="#e9e3df" /><path fill="#e23c3c" d="M10.500 9h2v3h-2Z" /></g>
                    <g v-else-if="c.code === 'th'"><path fill="#fff" d="M0 0h29v21H0Z" /><path fill="#ee2433" d="M0 0h29v4H0ZM0 17h29v4H0Z" /><path fill="#332f70" d="M0 7h29v7H0Z" /></g>
                    <g v-else-if="c.code === 'ca'"><path fill="#fff" d="M0 0h29v21H0Z" /><path fill="#fd2b30" d="M0 0h8v21H0ZM21 0h8v21h-8ZM14.500 5l1.500 3 1.500-1-.200 3 2.200-.500-.500 2-3.500 2.500-.500-.500v2h-1v-2l-.500.500-3.500-2.500-.500-2 2.200.500-.200-3 1.500 1Z" /></g>
                    <g v-else-if="c.code === 'cr'"><path fill="#fff" d="M0 0h29v21H0Z" /><path fill="#103f9b" d="M0 0h29v3.500H0ZM0 17.500h29V21H0Z" /><path fill="#e3213c" d="M0 7h29v7H0Z" /></g>
                    <g v-else-if="c.code === 'de'"><path fill="#262626" d="M0 0h29v7H0Z" /><path fill="#f01515" d="M0 7h29v7H0Z" /><path fill="#fdd321" d="M0 14h29v7H0Z" /></g>
                    <g v-else-if="c.code === 'es'"><path fill="#dd172c" d="M0 0h29v21H0Z" /><path fill="#fdcb2e" d="M0 5.500h29v10H0Z" /><path fill="#a3541c" d="M4 8h1.500v5H4ZM6.500 7h3v6.500h-3ZM10.500 8H12v5h-1.500Z" /></g>
                    <g v-else-if="c.code === 'pe'"><path fill="#fff" d="M0 0h29v21H0Z" /><path fill="#e62440" d="M0 0h10v21H0ZM19.500 0H29v21h-9.500Z" /></g>
                    <g v-else><path fill="#fff" d="M0 0h29v10.500H0Z" /><path fill="#ec3b2e" d="M0 10h29v11H0Z" /><path fill="#1a50b8" d="M0 0h10v10H0Z" /><circle cx="5" cy="5" r="2" fill="#b9c9ea" /></g>
                  </svg>
                  {{ c.name }}
                </span>
              </td>
              <td class="users">{{ c.users }}</td>
              <td class="share">{{ c.share }}</td>
            </tr>
          </tbody>
        </table>
      </section>

      <section class="card map">
        <svg viewBox="0 0 892 503" role="img" aria-label="Users by country">
          <g v-for="r in regions" :key="r.transform" :transform="r.transform">
            <path v-for="s in r.shapes" :key="s.d" :d="s.d" class="land" :class="s.tone" />
          </g>
        </svg>
      </section>
    </main>
  </div>
</template>

<style>
body {
  margin: 0;
  background: #fff;
}
</style>

<style scoped>
.page {
  display: flex;
  min-height: 100vh;
  box-sizing: border-box;
  padding: 1px 64px 0 81px;
  font-family: Roboto, "Liberation Sans", sans-serif;
  color: #3d3d3d;
}

.sidebar {
  flex: 0 0 139px;
  background: #511fa6;
}

.brand {
  display: flex;
  justify-content: center;
  height: 96px;
  padding-top: 21px;
}

.nav-item {
  display: flex;
  align-items: center;
  justify-content: center;
  height: 70px;
}

.nav-item.current {
  height: 72px;
  box-sizing: border-box;
  padding-right: 6px;
  border-left: 6px solid #00c2ff;
  background: #f4f6fb;
}

.nav-icon {
  fill: none;
  stroke: #d9cdee;
  stroke-width: 1.5;
  stroke-linejoin: round;
}

.current .nav-icon {
  stroke: #a58fd0;
}

.board {
  flex: 1;
  display: grid;
  grid-template-columns: repeat(3, minmax(0, 1fr));
  grid-template-rows: 460px auto;
  gap: 29px 28px;
  align-items: start;
  padding: 18px 24px 13px 340px;
  background: #fcfcfc;
}

.card {
  height: 100%;
  box-sizing: border-box;
  border-radius: 6px;
  background: #fff;
  box-shadow: 0 2px 5px rgba(60, 40, 40, 0.14);
}

.card-title {
  margin: 0;
  padding: 28px 43px 0;
  font-size: 23px;
  line-height: 28px;
  font-weight: 700;
}

.metrics {
  margin: 0;
  padding: 0 86px 0 32px;
  list-style: none;
}

.metric {
  display: grid;
  grid-template-columns: 43px 1fr auto;
  align-items: center;
  height: 75px;
  font-size: 20px;
  color: #777;
}

.metric-value {
  font-size: 21px;
}

.clock {
  margin: 0;
  padding-top: 131px;
  font-size: 101px;
  line-height: 116px;
  text-align: center;
  color: #0c91e7;
}

.devices {
  display: flex;
  justify-content: center;
  gap: 28px;
  padding-top: 24px;
}

.device {
  font-size: 17px;
  line-height: 22px;
}

.device strong {
  display: flex;
  align-items: center;
  gap: 5px;
  margin-top: 4px;
  font-size: 29px;
  line-height: 30px;
}

.mobile {
  color: #0c91e7;
}

.desktop {
  color: #5b2baa;
}

.pie {
  display: block;
  margin: 59px auto 0;
}

.ranking {
  overflow: hidden;
  padding-bottom: 8px;
}

table {
  width: 100%;
  border-collapse: separate;
  border-spacing: 0;
  table-layout: fixed;
  font-size: 20px;
}

.col-rank {
  width: 45px;
}

.col-country {
  width: 238px;
}

.col-users {
  width: 60px;
}

th,
td {
  box-sizing: border-box;
  height: 43px;
  padding: 0;
  text-align: left;
}

thead th {
  height: 63px;
  padding: 20px 0 0 17px;
  border-bottom: 2px solid #ddd;
  font-size: 23px;
}

thead th:nth-child(2) {
  padding-left: 11px;
}

tbody tr:nth-child(odd) {
  background: #f4f4f4;
}

tbody tr:nth-child(5n) > * {
  height: 44px;
}

tbody th {
  padding-left: 11px;
  border-right: 2px solid #ddd;
  font-size: 21px;
}

tbody td:nth-child(2) {
  border-right: 2px solid #ddd;
}

.country {
  display: flex;
  align-items: center;
  gap: 12px;
  padding-left: 11px;
  color: #555;
}

.flag {
  border-radius: 2px;
}

.users {
  padding-left: 22px;
  font-size: 21px;
  font-weight: 700;
}

.share {
  padding-right: 11px;
  text-align: right;
  color: #555;
}

.map {
  grid-column: span 2;
}

.map svg {
  display: block;
  width: 100%;
}

.land {
  fill: #f4f4f4;
  stroke: #dedede;
  stroke-width: 1.8px;
  stroke-linejoin: round;
  vector-effect: non-scaling-stroke;
}

.land.visited {
  fill: #eee6dc;
  stroke: #dcd3c9;
}

.land.active {
  fill: #dfe1cf;
  stroke: #ccceba;
}

.land.top {
  fill: #109618;
  stroke: #0f8c17;
}

.land.line {
  fill: none;
  stroke: #d9d4ce;
}
</style>
